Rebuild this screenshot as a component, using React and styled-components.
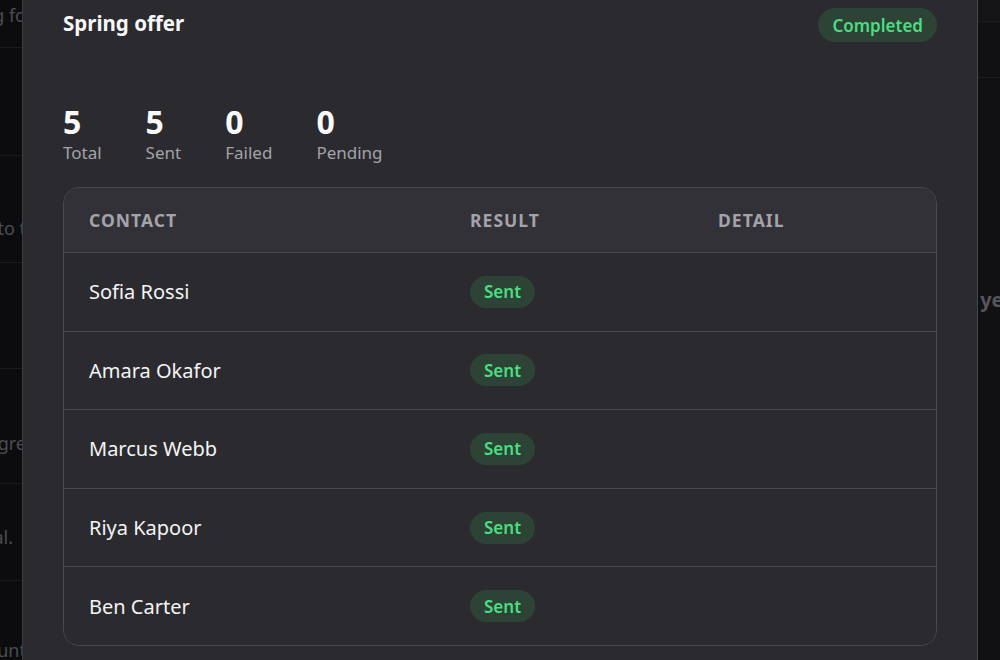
import React from "react";
import styled, { createGlobalStyle } from "styled-components";

const GlobalStyle = createGlobalStyle`
  html, body {
    margin: 0;
    padding: 0;
    background: #0c0c0e;
    overflow: hidden;
  }
  body {
    font-family: "Noto Sans", "Open Sans", sans-serif;
    color: #f2f2f4;
  }
  * { box-sizing: border-box; }
`;

const Screen = styled.div`
  position: relative;
  width: 1000px;
  height: 660px;
  overflow: hidden;
`;

/* page that sits behind the dialog */
const BackPage = styled.div`
  display: grid;
  grid-template-columns: 300px 1fr;
  height: 100%;
  margin-left: -274px;
  width: 1300px;
`;

const BackList = styled.div`
  display: flex;
  flex-direction: column;
  background: #0c0c0e;
  overflow: hidden;
`;

const BackRow = styled.div`
  flex: 0 0 ${(p) => p.$h}px;
  padding-top: ${(p) => p.$top}px;
  padding-right: ${(p) => p.$end}px;
  border-bottom: 1px solid #1b1b1f;
  display: flex;
  justify-content: flex-end;
  align-items: flex-start;
  font-size: 18px;
  line-height: 22px;
  color: #4c4c52;
  white-space: nowrap;
`;

const BackPane = styled.div`
  background: #111113;
  display: flex;
  flex-direction: column;
`;

const PaneTop = styled.div`
  height: 22px;
  background: #141416;
  border-bottom: 1px solid #1d1d20;
`;

const PaneBar = styled.div`
  height: 56px;
  border-bottom: 1px solid #1d1d20;
`;

const PaneEmpty = styled.div`
  padding-top: 208px;
  padding-left: 848px;
  font-size: 20px;
  font-weight: 700;
  color: #55555b;
  white-space: nowrap;
`;

/* dialog */
const Modal = styled.div`
  position: absolute;
  top: -32px;
  left: 22px;
  width: 956px;
  height: 760px;
  background: #2b2a2f;
  border-left: 1px solid #3c3b41;
  border-right: 1px solid #47464c;
  padding: 40px 40px 0 40px;
  display: flex;
  flex-direction: column;
`;

const Header = styled.div`
  display: flex;
  align-items: center;
  justify-content: space-between;
  height: 34px;
`;

const Title = styled.h2`
  margin: -4px 0 0;
  font-size: 20.5px;
  font-weight: 700;
  color: #f7f7f8;
  line-height: 1;
`;

const Pill = styled.span`
  display: inline-flex;
  align-items: center;
  justify-content: center;
  height: ${(p) => (p.$big ? 34 : 32)}px;
  padding: 0 14px;
  border-radius: 999px;
  background: #2c4336;
  color: #4ade80;
  font-size: 17px;
  font-weight: 600;
  line-height: 1;
`;

const Stats = styled.div`
  display: flex;
  gap: 44px;
  margin-top: 62px;
`;

const Stat = styled.div`
  display: flex;
  flex-direction: column;
`;

const StatValue = styled.div`
  font-size: 32px;
  font-weight: 700;
  line-height: 36px;
  color: #fafafa;
`;

const StatLabel = styled.div`
  font-size: 17px;
  line-height: 26px;
  color: #a3a3aa;
`;

const Table = styled.div`
  margin-top: 21px;
  border: 1px solid #4a494f;
  border-radius: 16px;
  overflow: hidden;
`;

const Row = styled.div`
  display: grid;
  grid-template-columns: 381px 248px 1fr;
  align-items: center;
  height: ${(p) => (p.$head ? 64 : 78.6)}px;
  background: ${(p) => (p.$head ? "#323137" : "#2b2a2f")};
  & + & {
    border-top: 1px solid #4a494f;
  }
`;

const HeadCell = styled.div`
  padding-left: 25px;
  font-size: 17.5px;
  font-weight: 700;
  letter-spacing: 0.06em;
  text-transform: uppercase;
  color: #a4a3aa;
`;

const Cell = styled.div`
  padding-left: 25px;
  font-size: 20px;
  color: #f4f4f5;
`;

const contacts = ["Sofia Rossi", "Amara Okafor", "Marcus Webb", "Riya Kapoor", "Ben Carter"];

const stats = [
  ["5", "Total"],
  ["5", "Sent"],
  ["0", "Failed"],
  ["0", "Pending"],
];

const backRows = [
  { h: 48, top: 4, end: 0, text: "Waiting fo" },
  { h: 108, top: 0, end: 0, text: "" },
  { h: 107, top: 61, end: 0, text: "Go to t" },
  { h: 106, top: 0, end: 0, text: "" },
  { h: 115, top: 63, end: 0, text: "Agre" },
  { h: 97, top: 42, end: 13, text: "Final." },
  { h: 110, top: 58, end: 0, text: "Count" },
];

export default function App() {
  return (
    <>
      <GlobalStyle />
      <Screen>
        <BackPage>
          <BackList>
            {backRows.map((r, i) => (
              <BackRow key={i} $h={r.h} $top={r.top} $end={r.end}>
                {r.text}
              </BackRow>
            ))}
          </BackList>
          <BackPane>
            <PaneTop />
            <PaneBar />
            <PaneEmpty>No replies yet</PaneEmpty>
          </BackPane>
        </BackPage>

        <Modal>
          <Header>
            <Title>Spring offer</Title>
            <Pill $big>Completed</Pill>
          </Header>

          <Stats>
            {stats.map(([v, l]) => (
              <Stat key={l}>
                <StatValue>{v}</StatValue>
                <StatLabel>{l}</StatLabel>
              </Stat>
            ))}
          </Stats>

          <Table>
            <Row $head>
              <HeadCell>Contact</HeadCell>
              <HeadCell>Result</HeadCell>
              <HeadCell>Detail</HeadCell>
            </Row>
            {contacts.map((name) => (
              <Row key={name}>
                <Cell>{name}</Cell>
                <Cell>
                  <Pill>Sent</Pill>
                </Cell>
                <Cell />
              </Row>
            ))}
          </Table>
        </Modal>
      </Screen>
    </>
  );
}
